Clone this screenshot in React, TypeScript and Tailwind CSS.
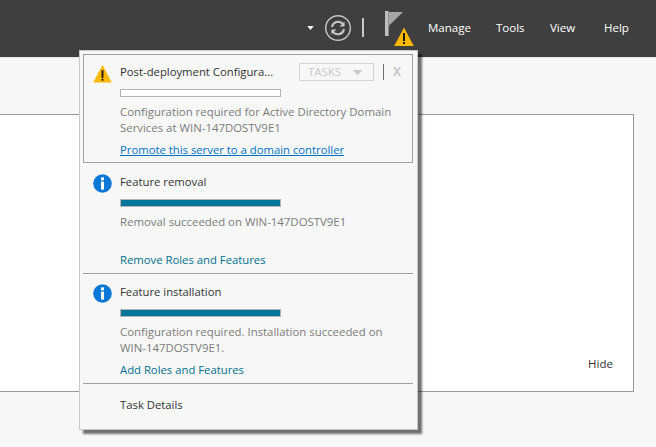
import React from "react";

const font = { fontFamily: '"Open Sans", "Noto Sans", sans-serif' };

function Warn({ className }: { className: string }) {
  return (
    <svg viewBox="0 0 20 19" className={className}>
      <path d="M10 0.5 L19.8 19 L0.2 19 Z" fill="#fdb900" />
      <rect x="9" y="6" width="2" height="8" fill="#1f1a10" />
      <rect x="9" y="15" width="2" height="2" fill="#1f1a10" />
    </svg>
  );
}

function Info() {
  return (
    <svg viewBox="0 0 20 20" className="w-[19px] h-[19px]">
      <circle cx="10" cy="10" r="9.8" fill="#0a78d7" />
      <rect x="8.4" y="3.6" width="3.2" height="3" fill="#fff" />
      <rect x="8.4" y="8" width="3.2" height="8.4" fill="#fff" />
    </svg>
  );
}

function Progress({ filled }: { filled: boolean }) {
  return (
    <div className={`w-[161px] h-[8px] border border-[#b4b4b4] ${filled ? "bg-[#007599]" : "bg-white"}`} />
  );
}

function Notice({
  icon,
  title,
  lines,
  link,
  linkClass,
  height,
  linkGap,
  pt,
  border,
  right,
}: {
  icon: React.ReactNode;
  title: string;
  lines: string[];
  link: string;
  linkClass: string;
  height: string;
  linkGap: string;
  pt: string;
  border: string;
  right?: React.ReactNode;
}) {
  return (
    <div className={`flex ${height} ${pt} ${border}`}>
      <div className="w-[36px] pl-[9px] shrink-0">{icon}</div>
      <div className="flex-1 min-w-0">
        <div className="flex h-[16px] items-center justify-between">
          <span className="text-[11.3px] leading-[16px] text-[#333333]">{title}</span>
          {right}
        </div>
        <div className="mt-[9px]">
          <Progress filled={!right} />
        </div>
        <div className="mt-[7px] text-[11.4px] leading-[16px] text-[#7b7b7b] whitespace-nowrap">
          {lines.map((l) => (
            <div key={l}>{l}</div>
          ))}
        </div>
        <div className={`${linkGap} text-[11.3px] leading-[16px] whitespace-nowrap ${linkClass}`}>{link}</div>
      </div>
    </div>
  );
}

export default function App() {
  return (
    <div className="relative w-[656px] h-[447px] overflow-hidden bg-[#f7f7f7]" style={font}>
      <header className="h-[58px] bg-[#3f3f3f] border-b border-[#e6e6e6] pb-[2px] flex items-center justify-end text-white text-[11.5px]">
        <svg viewBox="0 0 8 5" className="w-[7px] h-[4px] mr-[10px]">
          <path d="M0 0 H8 L4 5 Z" fill="#ffffff" />
        </svg>
        <svg viewBox="0 0 28 28" className="w-[28px] h-[28px]" fill="none">
          <circle cx="14" cy="14" r="12.3" stroke="#c8c8c8" strokeWidth="1.4" />
          <path d="M8 13 A6.2 6.2 0 0 1 18.6 9.6 L20 11" stroke="#c8c8c8" strokeWidth="2" />
          <path d="M20.5 7.5 V12.5 H15.5 Z" fill="#c8c8c8" />
          <path d="M20 15 A6.2 6.2 0 0 1 9.4 18.4 L8 17" stroke="#c8c8c8" strokeWidth="2" />
          <path d="M7.5 20.5 V15.5 H12.5 Z" fill="#c8c8c8" />
        </svg>
        <div className="w-[2px] h-[19px] bg-[#c8c8c8] ml-[10px]" />
        <div className="relative w-[30px] h-[30px] ml-[21px] mr-[13px] mt-[-3px]">
          <svg viewBox="0 0 18 25" className="w-[18px] h-[25px]">
            <rect x="0" y="0" width="3.6" height="25" fill="#bdbdbd" />
            <path d="M3.6 1 H18 L3.6 15 Z" fill="#a6a6a6" />
          </svg>
          <Warn className="absolute left-[9px] top-[16px] w-[20px] h-[19px]" />
        </div>
        <span className="w-[68px] font-medium">Manage</span>
        <span className="w-[54px] font-medium">Tools</span>
        <span className="w-[54px] font-medium">View</span>
        <span className="w-[52px] font-medium">Help</span>
      </header>

      <main className="pt-[56px]">
        <div className="w-[634px] h-[278px] bg-white border-t border-r border-b border-[#999999] relative">
          <span className="absolute right-[20px] bottom-[19px] text-[11.5px] leading-[16px] text-[#333333]">Hide</span>
        </div>
      </main>

      <div className="absolute left-[79px] top-[50px] w-[339px] h-[380px] bg-[#f7f7f7] border border-[#c8c8c8] shadow-[4px_4px_2px_rgba(0,0,0,0.55)] pl-[3px] pr-[4px] pt-[3px]">
        <div className="border border-[#a0a0a0]">
          <Notice
            icon={<Warn className="w-[19px] h-[19px]" />}
            title="Post-deployment Configura..."
            lines={["Configuration required for Active Directory Domain", "Services at WIN-147DOSTV9E1"]}
            link="Promote this server to a domain controller"
            linkClass="text-[#0072c6] underline"
            height="h-[107px]"
            linkGap="mt-[6px]"
            pt="pt-[9px]"
            border=""
            right={
              <div className="flex items-center mr-[11px]">
                <div className="w-[75px] h-[18px] border border-[#d4d4d4] flex items-center justify-between pl-[8px] pr-[10px] text-[11.5px] text-[#c8c8c8]">
                  TASKS
                  <svg viewBox="0 0 10 5" className="w-[11px] h-[5px]">
                    <path d="M0 0 H10 L5 5 Z" fill="#c8c8c8" />
                  </svg>
                </div>
                <div className="w-px h-[16px] bg-[#707070] ml-[9px]" />
                <span className="ml-[9px] font-bold text-[12px] text-[#c8c8c8]">X</span>
              </div>
            }
          />
        </div>
        <Notice
          icon={<Info />}
          title="Feature removal"
          lines={["Removal succeeded on WIN-147DOSTV9E1"]}
          link="Remove Roles and Features"
          linkClass="text-[#006f8f]"
          height="h-[111px] pl-[1px]"
          linkGap="mt-[22px]"
          pt="pt-[11px]"
          border="border-b border-[#a0a0a0]"
        />
        <Notice
          icon={<Info />}
          title="Feature installation"
          lines={["Configuration required. Installation succeeded on", "WIN-147DOSTV9E1."]}
          link="Add Roles and Features"
          linkClass="text-[#006f8f]"
          height="h-[110px] pl-[1px]"
          linkGap="mt-[6px]"
          pt="pt-[10px]"
          border="border-b border-[#a0a0a0]"
        />
        <div className="pl-[37px] pt-[13px] text-[11.3px] leading-[16px] text-[#333333]">Task Details</div>
      </div>
    </div>
  );
}
